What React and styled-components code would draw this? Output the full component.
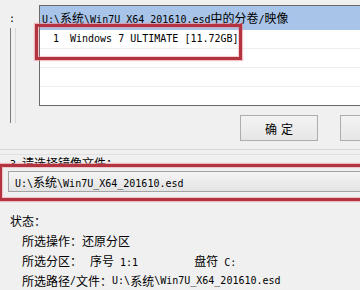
import React from "react";
import styled, { createGlobalStyle } from "styled-components";

const Global = createGlobalStyle`
  html, body { margin: 0; padding: 0; background: #f0f0f0; }
  body { width: 360px; height: 290px; overflow: hidden; }
`;

const Page = styled.div`
  position: relative;
  width: 360px;
  height: 290px;
  overflow: hidden;
  background: #f0f0f0;
  font-family: "DejaVu Sans Mono", "Liberation Mono", "Noto Sans CJK SC", monospace;
  font-size: 10px;
  color: #000;
`;

const Cjk = styled.span`
  font-family: "Noto Sans CJK SC", sans-serif;
  font-size: 12px;
`;

const CJK_RE = /([\u3000-\u9fff\uff00-\uffef]+)/;

function Mixed({ text }) {
  return text
    .split(CJK_RE)
    .filter(Boolean)
    .map((part, i) =>
      CJK_RE.test(part) ? <Cjk key={i}>{part}</Cjk> : <React.Fragment key={i}>{part}</React.Fragment>
    );
}

const Top = styled.div`
  display: grid;
  grid-template-columns: 39px 1fr;
  height: 149px;
  border-bottom: 1px solid #d6d6d6;
`;

const Gutter = styled.div`
  display: flex;
  flex-direction: column;
  padding-left: 9px;
`;

const Colon = styled.div`
  margin-top: 14px;
  line-height: 10px;
  font-size: 10px;
`;

const GroupEdge = styled.div`
  margin-top: 4px;
  margin-left: 1px;
  width: 1px;
  height: 95px;
  background: #7c7c7c;
  box-shadow: 5px 0 0 #d9d9d9;
`;

const Main = styled.div`
  padding-top: 5px;
  min-width: 0;
`;

const ListBox = styled.div`
  height: 99px;
  margin-right: -12px;
  border: 1px solid #6a6a6a;
  border-right: none;
  background: #fff;
  overflow: hidden;
`;

const ListHeader = styled.div`
  height: 24px;
  line-height: 24px;
  padding-left: 2px;
  background: #a9c4e9;
  white-space: nowrap;
`;

const Row = styled.div`
  display: flex;
  height: 18px;
  line-height: 18px;
  padding-left: 13px;
  border-bottom: 1px solid #eeeeee;
  white-space: nowrap;
`;

const Num = styled.span`
  width: 17px;
  flex-shrink: 0;
`;

const ButtonRow = styled.div`
  display: flex;
  gap: 22px;
  margin-top: 9px;
  padding-left: 201px;
`;

const Button = styled.div`
  flex-shrink: 0;
  width: 76px;
  height: 24px;
  border: 1px solid #adadad;
  background: linear-gradient(#f3f3f3, #e6e6e6);
  display: flex;
  align-items: center;
  justify-content: center;
  font-family: "Noto Sans CJK SC", sans-serif;
  font-size: 12px;
  letter-spacing: 4px;
  text-indent: 4px;
`;

const Divider = styled.div`
  margin-top: 4px;
  height: 1px;
  background: #e0e0e0;
`;

const FileSection = styled.div`
  padding-left: 8px;
`;

const SectionLabel = styled.div`
  padding-left: 2px;
  height: 12px;
  line-height: 16px;
  overflow: hidden;
  white-space: nowrap;
`;

const FileInput = styled.div`
  margin-top: 4px;
  margin-right: -10px;
  height: 19px;
  line-height: 19px;
  padding-left: 6px;
  border: 1px solid #a3a3a3;
  border-right: none;
  background: linear-gradient(#f5f5f5, #e3e3e3);
  white-space: nowrap;
`;

const Status = styled.div`
  margin-top: 19px;
  padding-left: 10px;
`;

const StatusTitle = styled.div`
  line-height: 20px;
  height: 20px;
`;

const StatusRow = styled.div`
  display: flex;
  padding-left: 12px;
  line-height: 20px;
  height: 20px;
  white-space: nowrap;
`;

const Spaced = styled.span`
  margin-left: ${(p) => p.$gap}px;
`;

const Highlight = styled.div`
  position: absolute;
  left: ${(p) => p.$x}px;
  top: ${(p) => p.$y}px;
  width: ${(p) => p.$w}px;
  height: ${(p) => p.$h}px;
  box-sizing: border-box;
  border: 3px solid #b3343f;
  box-shadow: 0 0 1px 1px rgba(235, 140, 150, 0.55), inset 0 0 1px 1px rgba(235, 140, 150, 0.45);
  pointer-events: none;
`;

export default function App() {
  return (
    <Page>
      <Global />
      <Top>
        <Gutter>
          <Colon>:</Colon>
          <GroupEdge />
        </Gutter>
        <Main>
          <ListBox>
            <ListHeader>
              <Mixed text="U:\系统\Win7U_X64_201610.esd中的分卷/映像" />
            </ListHeader>
            <Row>
              <Num>1</Num>
              <span>Windows 7 ULTIMATE [11.72GB]</span>
            </Row>
            <Row />
            <Row />
          </ListBox>
          <ButtonRow>
            <Button>确定</Button>
            <Button />
          </ButtonRow>
        </Main>
      </Top>
      <Divider />
      <FileSection>
        <SectionLabel>
          <Mixed text="3.请选择镜像文件：" />
        </SectionLabel>
        <FileInput>
          <Mixed text="U:\系统\Win7U_X64_201610.esd" />
        </FileInput>
      </FileSection>
      <Status>
        <StatusTitle>
          <Mixed text="状态：" />
        </StatusTitle>
        <StatusRow>
          <Mixed text="所选操作：还原分区" />
        </StatusRow>
        <StatusRow>
          <Mixed text="所选分区：" />
          <Spaced $gap={8}>
            <Mixed text="序号 1:1" />
          </Spaced>
          <Spaced $gap={56}>
            <Mixed text="盘符 C:" />
          </Spaced>
        </StatusRow>
        <StatusRow>
          <Mixed text="所选路径/文件：U:\系统\Win7U_X64_201610.esd" />
        </StatusRow>
      </Status>
      <Highlight $x={35} $y={24} $w={207} $h={36} />
      <Highlight $x={-1} $y={164} $w={372} $h={37} />
    </Page>
  );
}
